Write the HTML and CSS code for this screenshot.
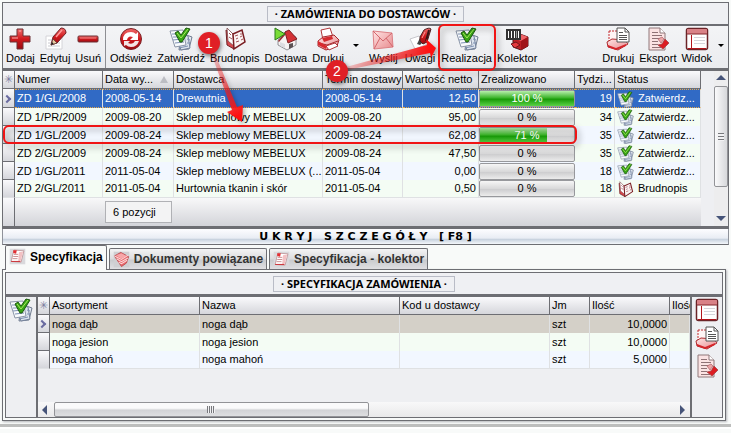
FILE: index.html
```html
<!DOCTYPE html>
<html lang="pl">
<head>
    <meta charset="UTF-8">
    <meta name="viewport" content="width=device-width, initial-scale=1.0">
    <title>Zamówienia do dostawców</title>
    <link rel="stylesheet" href="styles.css">
</head>
<body>
    <!-- Ikony -->
    <svg class="sprites" aria-hidden="true">
        <defs>
            <linearGradient id="red" x1="0" y1="0" x2="0" y2="1">
                <stop offset="0" stop-color="#f06a6a"/>
                <stop offset="0.5" stop-color="#d01a1e"/>
                <stop offset="1" stop-color="#9c0a10"/>
            </linearGradient>
            <linearGradient id="pink" x1="0" y1="0" x2="1" y2="1">
                <stop offset="0" stop-color="#ffe4e4"/>
                <stop offset="1" stop-color="#e88a8e"/>
            </linearGradient>
            <linearGradient id="arrow1" gradientUnits="userSpaceOnUse" x1="212" y1="52" x2="240" y2="116">
                <stop offset="0" stop-color="#f02020" stop-opacity="0.15"/>
                <stop offset="0.8" stop-color="#f81818" stop-opacity="0.85"/>
                <stop offset="1" stop-color="#ff1010"/>
            </linearGradient>
            <linearGradient id="arrow2" gradientUnits="userSpaceOnUse" x1="346" y1="69" x2="430" y2="49">
                <stop offset="0" stop-color="#f02020" stop-opacity="0.2"/>
                <stop offset="0.8" stop-color="#f81818" stop-opacity="0.85"/>
                <stop offset="1" stop-color="#ff1010"/>
            </linearGradient>
        </defs>
        <symbol id="i-plus" viewBox="0 0 24 24">
            <path d="M9 2h6v7h7v6h-7v7H9v-7H2V9h7z" fill="url(#red)" stroke="#6d3034"/>
            <path d="M11 4h2M4 11h6" stroke="#f9b0b0" fill="none"/>
        </symbol>
        <symbol id="i-minus" viewBox="0 0 24 24">
            <rect x="2" y="9" width="20" height="6" rx="1" fill="url(#red)" stroke="#6d3034"/>
            <path d="M4 11h16" stroke="#f08080"/>
        </symbol>
        <symbol id="i-edit" viewBox="0 0 24 24">
            <path d="M3 9h16v13H3z" fill="#fff" stroke="#d4d4d8"/>
            <path d="M5 13h6M5 16h12M5 19h12" stroke="#c9c9cf"/>
            <path d="M8 18l2-8 8-9q5 0 5 5l-9 10z" fill="url(#red)" stroke="#742025"/>
            <path d="M8 18l2-6 4 4z" fill="#e7caa0" stroke="#55383a" stroke-width=".7"/>
            <path d="M13 10l6-7" stroke="#ff9a9a" stroke-width="1.5"/>
            <path d="M8 18l1-3 1.600 1.700z" fill="#222"/>
        </symbol>
        <symbol id="i-refresh" viewBox="0 0 24 24">
            <circle cx="12" cy="12" r="10.500" fill="url(#red)" stroke="#7a2226"/>
            <path d="M4 13q0-8 8-8 3 0 5 2l2-2v8h-8l3-3q-5-2-6 3z" fill="#fff"/>
            <path d="M20 14q-2 6-8 6-3 0-5-2l-2 1v-5h6l-2 2q5 2 7-2z" fill="#f3e4e4"/>
        </symbol>
        <symbol id="i-approve" viewBox="0 0 24 24">
            <path d="M12 6l11 4-3 12-10 1z" fill="#e6ebf3" stroke="#6f7b8f"/>
            <path d="M6 6l13 3 2 12-9 2z" fill="#dde4ee" stroke="#74819a"/>
            <path d="M1 4l13-1 3 15-11 2z" fill="#f8fafc" stroke="#8b95a8"/>
            <path d="M3 7l4 0M4 10l4 0M4 13l9-1M6 16l9-1M10 21l9-2M18 12l3 1M18 16l3 0" stroke="#7f92b4"/>
            <path d="M6 6l3-2 3 4 5-7 4 1-8 13-2 0z" fill="#37a516" stroke="#1f5a10"/>
            <path d="M8 6l4 5 7-9" fill="none" stroke="#a9e85c"/>
        </symbol>
        <symbol id="i-book" viewBox="0 0 24 24">
            <path d="M3 3l7 4 1 15-7-4z" fill="#d8484d" stroke="#702226"/>
            <path d="M4 1l6 6 1 12-6-5z" fill="#fff" stroke="#7d4a4d" stroke-width=".8"/>
            <path d="M10 7l9-4 3 12-11 7z" fill="#faf4f3" stroke="#7a1e23" stroke-width="1.500"/>
            <path d="M12 9l3-1M13 12l2-1M13 15l3-1M17 7l2 0M17 10l2-1M18 13l2-1M6 6l2 2M6 10l3 2" stroke="#a5555a"/>
        </symbol>
        <symbol id="i-delivery" viewBox="0 0 24 24">
            <path d="M4 13l8-9 10 6v8l-9 5-9-5z" fill="#f5f2f2" stroke="#77777d" stroke-width=".8"/>
            <path d="M11 5l4-2 8 9-9 4z" fill="#d33236" stroke="#822125"/>
            <path d="M11 5l-7 9 1 1 7-8z" fill="#962e31"/>
            <path d="M15 22v-5l4-1v4z" fill="#5c5254"/>
            <path d="M6 15l5 2v4l-5-2z" fill="#dcdce0"/>
            <path d="M1 1l10 6-10 6z" fill="#79dc36" stroke="#2b7a1b"/>
        </symbol>
        <symbol id="i-print" viewBox="0 0 24 24">
            <path d="M5 3l9-2 3 9-10 3z" fill="#fff" stroke="#b13a3e"/>
            <path d="M2 14l5-4 11-2 5 5-2 6-11 4-8-4z" fill="url(#pink)" stroke="#a5272b"/>
            <path d="M6 11l10-2 1 3-9 3z" fill="#d32c30"/>
            <path d="M3 16l8 2 11-4" fill="none" stroke="#a5272b"/>
            <path d="M10 19l9-3 3 3-9 4z" fill="#fff" stroke="#b13a3e"/>
            <path d="M2 14l9 5-1 3-8-4z" fill="#d92a2f"/>
        </symbol>
        <symbol id="i-mail" viewBox="0 0 24 24">
            <path d="M2 4l19 2 1 14-19 2z" fill="url(#pink)" stroke="#dc8085"/>
            <path d="M2 4l10 10 9-8M3 22l6-11M22 20l-7-9" fill="none" stroke="#d3666c"/>
        </symbol>
        <symbol id="i-note" viewBox="0 0 24 24">
            <path d="M2 12l9-3 9 8-13 5z" fill="#fff" stroke="#c7c7cc"/>
            <path d="M9 17l3-6 5 2-5 5z" fill="#444"/>
            <path d="M12 10l4-7q5-3 7-1l-4 13-4 2-3-3z" fill="url(#red)" stroke="#4b2022"/>
            <path d="M17 5l-3 6" stroke="#ff9a9a"/>
            <path d="M21 3l-3 11" stroke="#3b1618" stroke-width="2"/>
        </symbol>
        <symbol id="i-collector" viewBox="0 0 24 24">
            <path d="M8 11l7-4 8 3v9l-7 4-8-3z" fill="#bd2025" stroke="#5c1418"/>
            <path d="M8 11l8 3 7-4-8-3z" fill="#ef6468"/>
            <path d="M16 14v9l7-4v-9z" fill="#a0151a"/>
            <rect x="1" y="2" width="15" height="11" fill="#333"/>
            <path d="M3.500 4v7M6.500 4v7M9.500 4v7M13.500 4v7" stroke="#fff"/>
            <path d="M11.500 4v7" stroke="#fff" stroke-width=".5"/>
            <path d="M6 17l5-2 4 3-5 3z" fill="#e63a3e" stroke="#701519"/>
        </symbol>
        <symbol id="i-printdoc" viewBox="0 0 24 24">
            <path d="M3 4h9v10H3z" fill="#fff5f5" stroke="#c22a2e" stroke-dasharray="2 1"/>
            <path d="M1 15l5-3 13 1 3 4-10 6-10-3z" fill="url(#pink)" stroke="#ae2a2e"/>
            <path d="M2 18l8 3 10-4v2l-10 4-8-3z" fill="#d5262b"/>
            <path d="M11 1h8l4 4v10H11z" fill="#fff" stroke="#555"/>
            <path d="M19 1v4h4" fill="none" stroke="#555"/>
            <path d="M13 5.500h4M13 8.500h8M13 10.500h8M13 12.500h8" stroke="#555"/>
        </symbol>
        <symbol id="i-export" viewBox="0 0 24 24">
            <path d="M3 1h11l5 5v17H3z" fill="#fbe3e3" stroke="#90787b"/>
            <path d="M14 1v5h5" fill="#fff" stroke="#90787b"/>
            <path d="M6 5.500h6M6 8.500h10M6 11.500h10M6 14.500h6M6 17.500h6M6 20.500h9" stroke="#8f7275"/>
            <path d="M12 12l4-2 2 2-3 4z" fill="#eba5a7" stroke="#ad6468" stroke-width=".7"/>
            <path d="M12 18l4-1 3-5 4 4-6 6z" fill="#dc1d22" stroke="#9c4045" stroke-width=".7"/>
        </symbol>
        <symbol id="i-view" viewBox="0 0 24 24">
            <rect x="1.500" y="1.500" width="21" height="21" rx="2" fill="#fff" stroke="#6b2428" stroke-width="1.500"/>
            <path d="M2 3q0-1 1-1h18q1 0 1 1v4H2z" fill="#d98287"/>
            <path d="M2 7h20" stroke="#84282c"/>
            <path d="M6.500 8v13M3 21.500h18" stroke="#b3151b"/>
            <path d="M9 10.500h11M9 13.500h11M9 16.500h11" stroke="#d5d5da"/>
        </symbol>
        <symbol id="i-spec" viewBox="0 0 24 24">
            <path d="M1 1h22v22H1z" fill="#d9d9dc"/>
            <path d="M7 3l14 1-4 16-14-1z" fill="#fff" stroke="#b48387"/>
            <path d="M14 6l6-1-4 15-3-1z" fill="#f3c1c3"/>
            <path d="M7 9h6M6 12h7M5 15h7" stroke="#b8676b"/>
            <path d="M6 3l5 0-1 5-4-1z" fill="#e32e33"/>
            <path d="M3 19h13" stroke="#cc3a3f" stroke-width="1.500"/>
        </symbol>
        <symbol id="i-docs" viewBox="0 0 24 24">
            <path d="M1 1h22v22H1z" fill="#cfcfd2"/>
            <path d="M2 7l9-5 11 6-3 9-7 5z" fill="#e8686c" stroke="#b23439"/>
            <path d="M2 7l10 5 9-6M5 11l7 4 9-5M8 16l4 2 8-5" fill="none" stroke="#fbd5d6" stroke-width="1.500"/>
            <path d="M4 6l8-3 7 4-7 4z" fill="#f7a6a8"/>
        </symbol>
    </svg>

    <main class="window">
        <section class="orders">
            <header class="title-bar"><h1>· ZAMÓWIENIA DO DOSTAWCÓW ·</h1></header>

            <nav class="toolbar">
                <button type="button"><svg><use href="#i-plus"/></svg>Dodaj</button>
                <button type="button"><svg><use href="#i-edit"/></svg>Edytuj</button>
                <button type="button"><svg><use href="#i-minus"/></svg>Usuń</button>
                <span class="separator"></span>
                <button type="button"><svg><use href="#i-refresh"/></svg>Odśwież</button>
                <button type="button"><svg><use href="#i-approve"/></svg>Zatwierdź</button>
                <button type="button"><svg><use href="#i-book"/></svg>Brudnopis</button>
                <button type="button"><svg><use href="#i-delivery"/></svg>Dostawa</button>
                <button type="button"><svg><use href="#i-print"/></svg>Drukuj</button>
                <button type="button" class="more" aria-label="Więcej wydruków"></button>
                <button type="button" class="roomy"><svg><use href="#i-mail"/></svg>Wyślij</button>
                <button type="button" class="roomy"><svg><use href="#i-note"/></svg>Uwagi</button>
                <button type="button"><svg><use href="#i-approve"/></svg>Realizacja</button>
                <button type="button"><svg><use href="#i-collector"/></svg>Kolektor</button>
                <span class="spacer"></span>
                <button type="button"><svg><use href="#i-printdoc"/></svg>Drukuj</button>
                <button type="button"><svg><use href="#i-export"/></svg>Eksport</button>
                <button type="button"><svg><use href="#i-view"/></svg>Widok</button>
                <button type="button" class="more narrow" aria-label="Więcej widoków"></button>
            </nav>

            <div class="orders-body">
                <table class="grid">
                    <colgroup>
                        <col class="w-mark"><col class="w-number"><col class="w-date"><col><col class="w-term">
                        <col class="w-net"><col class="w-done"><col class="w-week"><col class="w-status">
                    </colgroup>
                    <thead>
                        <tr>
                            <th class="mark">✳</th><th>Numer</th><th>Data wy... <i class="sort"></i></th><th>Dostawca</th>
                            <th>Termin dostawy</th><th>Wartość netto</th><th>Zrealizowano</th><th>Tydzi...</th><th>Status</th>
                        </tr>
                    </thead>
                    <tbody>
                        <tr class="selected">
                            <td class="mark"><i class="current"></i></td><td>ZD 1/GL/2008</td><td>2008-05-14</td><td>Drewutnia</td><td>2008-05-14</td><td class="num">12,50</td>
                            <td class="done"><div class="bar full"><span class="fill" style="width: 100%"></span><b>100 %</b></div></td>
                            <td class="num">19</td><td><svg class="small"><use href="#i-approve"/></svg>Zatwierdz...</td>
                        </tr>
                        <tr>
                            <td class="mark"></td><td>ZD 1/PR/2009</td><td>2009-08-20</td><td>Sklep meblowy MEBELUX</td><td>2009-08-20</td><td class="num">95,00</td>
                            <td class="done"><div class="bar"><b>0 %</b></div></td>
                            <td class="num">34</td><td><svg class="small"><use href="#i-approve"/></svg>Zatwierdz...</td>
                        </tr>
                        <tr>
                            <td class="mark"></td><td>ZD 1/GL/2009</td><td>2009-08-24</td><td>Sklep meblowy MEBELUX</td><td>2009-08-24</td><td class="num">62,08</td>
                            <td class="done"><div class="bar full"><span class="fill" style="width: 71%"></span><b>71 %</b></div></td>
                            <td class="num">35</td><td><svg class="small"><use href="#i-approve"/></svg>Zatwierdz...</td>
                        </tr>
                        <tr>
                            <td class="mark"></td><td>ZD 2/GL/2009</td><td>2009-08-24</td><td>Sklep meblowy MEBELUX</td><td>2009-08-24</td><td class="num">47,50</td>
                            <td class="done"><div class="bar"><b>0 %</b></div></td>
                            <td class="num">35</td><td><svg class="small"><use href="#i-approve"/></svg>Zatwierdz...</td>
                        </tr>
                        <tr>
                            <td class="mark"></td><td>ZD 1/GL/2011</td><td>2011-05-04</td><td>Sklep meblowy MEBELUX (...</td><td>2011-05-04</td><td class="num">0,00</td>
                            <td class="done"><div class="bar"><b>0 %</b></div></td>
                            <td class="num">18</td><td><svg class="small"><use href="#i-approve"/></svg>Zatwierdz...</td>
                        </tr>
                        <tr>
                            <td class="mark"></td><td>ZD 2/GL/2011</td><td>2011-05-04</td><td>Hurtownia tkanin i skór</td><td>2011-05-04</td><td class="num">0,50</td>
                            <td class="done"><div class="bar"><b>0 %</b></div></td>
                            <td class="num">18</td><td><svg class="small"><use href="#i-book"/></svg>Brudnopis</td>
                        </tr>
                    </tbody>
                    <tfoot>
                        <tr>
                            <td class="mark"></td><td></td><td class="count"><span>6 pozycji</span></td><td colspan="6"></td>
                        </tr>
                    </tfoot>
                </table>
                <div class="scroll-y">
                    <i class="up"></i>
                    <div class="thumb"></div>
                    <i class="down"></i>
                </div>
            </div>
        </section>

        <button type="button" class="toggle">U K R Y J &nbsp; S Z C Z E G Ó Ł Y &nbsp; [ F8 ]</button>

        <div class="tabs" role="tablist">
            <button type="button" role="tab" aria-selected="true" class="active"><svg class="small"><use href="#i-spec"/></svg>Specyfikacja</button>
            <button type="button" role="tab" aria-selected="false"><svg class="small"><use href="#i-docs"/></svg>Dokumenty powiązane</button>
            <button type="button" role="tab" aria-selected="false"><svg class="small"><use href="#i-spec"/></svg>Specyfikacja - kolektor</button>
        </div>

        <section class="details">
            <div class="details-inner">
                <header class="title-bar"><h2>· SPECYFIKACJA ZAMÓWIENIA ·</h2></header>
                <div class="details-body">
                    <div class="side">
                        <button type="button" aria-label="Zatwierdź"><svg><use href="#i-approve"/></svg></button>
                    </div>
                    <div class="spec">
                        <table class="grid">
                            <colgroup>
                                <col class="w-mark"><col class="w-product"><col class="w-name"><col class="w-code">
                                <col class="w-unit"><col class="w-qty"><col>
                            </colgroup>
                            <thead>
                                <tr><th class="mark">✳</th><th>Asortyment</th><th>Nazwa</th><th>Kod u dostawcy</th><th>Jm</th><th>Ilość</th><th class="cut">Ilość</th></tr>
                            </thead>
                            <tbody>
                                <tr class="current-row"><td class="mark"><i class="current"></i></td><td>noga dąb</td><td>noga dąb</td><td></td><td>szt</td><td class="num">10,0000</td><td></td></tr>
                                <tr><td class="mark"></td><td>noga jesion</td><td>noga jesion</td><td></td><td>szt</td><td class="num">10,0000</td><td></td></tr>
                                <tr><td class="mark"></td><td>noga mahoń</td><td>noga mahoń</td><td></td><td>szt</td><td class="num">5,0000</td><td></td></tr>
                            </tbody>
                        </table>
                        <div class="scroll-x">
                            <i class="left"></i>
                            <div class="thumb"></div>
                            <i class="right"></i>
                        </div>
                    </div>
                    <div class="side">
                        <button type="button" aria-label="Widok"><svg><use href="#i-view"/></svg></button>
                        <button type="button" aria-label="Drukuj"><svg><use href="#i-printdoc"/></svg></button>
                        <button type="button" aria-label="Eksport"><svg><use href="#i-export"/></svg></button>
                    </div>
                </div>
            </div>
        </section>
    </main>
    <footer class="bottom-edge"></footer>

    <!-- Oznaczenia kroków instrukcji -->
    <svg class="callouts" viewBox="0 0 731 433">
        <g class="frames">
            <rect x="439" y="25" width="56" height="45" rx="5"/>
            <rect x="4" y="126" width="572" height="17" rx="5"/>
        </g>
        <path d="M211 53L214 51L237 107L243 105L242 122L227 112L232 110Z" fill="url(#arrow1)" class="arrow"/>
        <path d="M347 70L346 67L427 45L426 39L436 48L431 58L430 53Z" fill="url(#arrow2)" class="arrow"/>
        <g class="steps">
            <circle cx="209" cy="43" r="11"/>
            <circle cx="337" cy="71" r="11"/>
            <text x="209" y="48">1</text>
            <text x="337" y="76">2</text>
        </g>
    </svg>
</body>
</html>
```
FILE: styles.css
```css
body {
    margin: 0;
    background-color: #f8faf9;
    font-family: "Liberation Sans", Arial, sans-serif;
    font-size: 11px;
    color: #000;
}

button {
    font-family: inherit;
    font-size: inherit;
    color: inherit;
    background: none;
    border: none;
    padding: 0;
    margin: 0;
}

.sprites {
    position: absolute;
    width: 0;
    height: 0;
}

.window {
    padding: 2px 2px 0 2px;
}

.orders {
    border: 1px solid #6d6e73;
    border-bottom-width: 3px;
    background-color: #eeeff2;
}

/* Tytuły */
.title-bar {
    height: 21px;
    display: flex;
    justify-content: center;
    align-items: center;
    background-color: #eff0f3;
    border-bottom: 2px solid #6d6e73;
}

.title-bar h1,
.title-bar h2 {
    margin: 0;
    padding: 0 7px;
    border: 1px solid #b9bcc6;
    font-family: "Noto Sans", sans-serif;
    font-size: 11px;
    line-height: 14px;
    font-weight: bold;
    white-space: pre;
}

/* Pasek narzędzi */
.toolbar {
    height: 42px;
    display: flex;
    gap: 5px;
    padding: 0 3px;
    background: linear-gradient(#f3f4f6, #ebecef);
    border-bottom: 3px solid #6d6e73;
}

.toolbar button {
    display: flex;
    flex-direction: column;
    align-items: center;
    padding-top: 1px;
    line-height: 14px;
    white-space: nowrap;
}

.toolbar svg {
    width: 24px;
    height: 24px;
}

.toolbar .roomy {
    padding-left: 1px;
    padding-right: 1px;
}

.toolbar .separator {
    width: 1px;
    margin: 0 -1px;
    background-color: #8d8e93;
}

.toolbar .spacer {
    flex: 1;
}

.toolbar .more {
    width: 14px;
    padding-top: 18px;
}

.toolbar .narrow {
    width: 8px;
}

.more::before {
    content: "";
    border: 3px solid transparent;
    border-top-color: #000;
    border-bottom: none;
}

/* Tabele */
.orders-body {
    display: flex;
}

.grid {
    width: 100%;
    table-layout: fixed;
    border-collapse: separate;
    border-spacing: 0;
    flex: 1;
}

.grid th,
.grid td {
    box-sizing: border-box;
    height: 18px;
    padding: 0 2px;
    line-height: 15px;
    text-align: left;
    font-weight: normal;
    white-space: nowrap;
    overflow: hidden;
    border-right: 1px solid #dfe1e3;
}

.grid th {
    background: linear-gradient(#fafafc, #d5d6db);
    border-right-color: #6d6e73;
    border-bottom: 1px solid #6d6e73;
}

.grid tbody tr {
    background-color: #f2f7ff;
}

.grid tbody tr:nth-child(even) {
    background-color: #f4fcf4;
}

.grid tbody tr:last-child td {
    border-bottom: 1px solid #dfe1e3;
}

.grid .mark {
    padding: 0;
    text-align: center;
    color: #7b7fa0;
    background: linear-gradient(#fafafc, #d5d6db);
    border-right: 1px solid #6d6e73;
    border-bottom: 1px solid #6d6e73;
}

.grid td.num {
    text-align: right;
}

.grid .selected {
    color: #fff;
    background-color: #316ac5;
}

.selected td:not(.mark) {
    border-top: 1px dotted #e8a848;
    border-bottom: 1px dotted #e8a848;
}

.grid .current-row {
    background-color: #d4d0c8;
}

.w-mark { width: 12px; }
.w-number { width: 88px; }
.w-date { width: 71px; }
.w-term { width: 80px; }
.w-net { width: 76px; }
.w-done { width: 96px; }
.w-week { width: 40px; }
.w-status { width: 86px; }
.w-product { width: 150px; }
.w-name { width: 200px; }
.w-code { width: 150px; }
.w-unit { width: 40px; }
.w-qty { width: 80px; }

.sort {
    display: inline-block;
    margin-left: 4px;
    border: 4px solid transparent;
    border-top: none;
    border-bottom: 7px solid #bcbdc3;
}

.current {
    display: inline-block;
    width: 4px;
    height: 4px;
    border-top: 2px solid #6a6ca0;
    border-right: 2px solid #6a6ca0;
    transform: rotate(45deg);
    margin-left: -4px;
}

svg.small {
    width: 17px;
    height: 17px;
    margin: -2px 4px -2px 0;
    vertical-align: middle;
}

.grid .done {
    padding: 0;
    border: none;
}

.bar {
    position: relative;
    height: 15px;
    border: 1px solid #97989c;
    border-radius: 2px;
    background: linear-gradient(#f6f6f6, #d9d9da 50%, #cdcdcf 55%, #ececec);
    text-align: center;
    line-height: 15px;
}

.bar .fill {
    position: absolute;
    left: 0;
    top: 0;
    height: 100%;
    background: linear-gradient(#b7eeab, #3eb52c 45%, #189a08 55%, #5bd247);
}

.bar b {
    position: relative;
    font-weight: normal;
}

.bar.full b {
    color: #fff;
}

.grid tfoot td {
    height: 28px;
    border-right: none;
    background: linear-gradient(#f8f8f9, #d3d4d9);
}

.grid tfoot .mark {
    border-right: 1px solid #6d6e73;
    border-bottom: none;
}

.count span {
    display: block;
    padding: 0 7px;
    line-height: 20px;
    border: 1px solid #b0b1b5;
    background-color: #f3f3f4;
}

/* Paski przewijania */
.scroll-y {
    width: 14px;
    margin-left: 13px;
    display: flex;
    flex-direction: column;
    align-items: center;
    background-color: #ededee;
}

.scroll-y .thumb {
    flex: 1;
    width: 12px;
    margin: 6px 0 29px;
    border: 1px solid #929397;
    border-radius: 2px;
    background: repeating-linear-gradient(#77787c 0 1px, #f2f2f4 1px 3px) center / 6px 8px no-repeat, linear-gradient(90deg, #fafafb, #d7d8db);
}

.scroll-y i,
.scroll-x i {
    border: 5px solid transparent;
}

.scroll-y .up {
    margin-top: 4px;
    border-top: none;
    border-bottom-color: #465479;
}

.scroll-y .down {
    margin-bottom: 5px;
    border-bottom: none;
    border-top-color: #465479;
}

.scroll-x {
    height: 15px;
    margin-top: auto;
    display: flex;
    align-items: center;
    background: linear-gradient(#f8f8f9, #e9e9ea);
}

.scroll-x .thumb {
    width: 48%;
    height: 13px;
    margin: 0 auto 0 7px;
    border: 1px solid #929397;
    border-radius: 2px;
    background: repeating-linear-gradient(90deg, #77787c 0 1px, #f2f2f4 1px 2px) center / 8px 7px no-repeat, linear-gradient(#fafafb 40%, #d2d3d6 55%, #dedfe1);
}

.scroll-x .left {
    margin-left: 4px;
    border-left: none;
    border-right-color: #465479;
}

.scroll-x .right {
    margin-right: 5px;
    border-right: none;
    border-left-color: #465479;
}

/* Przycisk zwijania */
.toggle {
    display: block;
    width: 100%;
    height: 16px;
    border: 1px solid #8f929a;
    border-top: none;
    border-bottom-color: #6d6e73;
    background: linear-gradient(#fdfdff, #e9edf4 60%, #c9d3df 70%, #f4f7fb);
    font-family: "DejaVu Sans", Verdana, sans-serif;
    font-size: 11px;
    font-weight: bold;
    line-height: 14px;
}

/* Zakładki */
.tabs {
    display: flex;
    align-items: flex-end;
    gap: 2px;
    height: 24px;
    padding-left: 3px;
}

.tabs button {
    box-sizing: border-box;
    height: 21px;
    padding: 0 3px;
    display: flex;
    align-items: center;
    font-size: 12px;
    font-weight: bold;
    white-space: nowrap;
    color: #333;
    border: 1px solid #6d6e73;
    border-bottom: none;
    border-radius: 2px 2px 0 0;
    background: linear-gradient(#f3f3f4, #dcdcde 50%, #c9cacd 55%, #dfdfe2);
}

.tabs .active {
    position: relative;
    height: 25px;
    margin-bottom: -1px;
    padding-bottom: 3px;
    color: #000;
    background: #f8faf9;
}

/* Szczegóły */
.details {
    margin-right: 3px;
    padding: 2px;
    border: 1px solid #6d6e73;
    box-shadow: 1px 1px 2px #b5b6ba;
}

.details-inner {
    border: 1px solid #6d6e73;
}

.details .title-bar {
    border-bottom-width: 3px;
}

.details-body {
    display: flex;
    min-height: 120px;
    background-color: #eeeff2;
}

.side {
    width: 30px;
    display: flex;
    flex-direction: column;
    align-items: center;
    gap: 4px;
    padding-top: 1px;
}

.side button,
.side svg {
    display: block;
    width: 24px;
    height: 24px;
}

.spec {
    flex: 1;
    min-width: 0;
    display: flex;
    flex-direction: column;
    border-left: 2px solid #6d6e73;
    border-right: 2px solid #6d6e73;
}

.spec .grid {
    flex: none;
}

.spec .cut {
    border-right: none;
}

.bottom-edge {
    margin-top: 3px;
    height: 3px;
    background-color: #bdbebd;
    border-bottom: 2px solid #fff;
    box-shadow: 0 1px 0 #6d6e73, 0 6px 0 #eeeff0;
}

/* Oznaczenia */
.callouts {
    position: absolute;
    left: 0;
    top: 0;
    width: 731px;
    height: 433px;
    pointer-events: none;
}

.frames rect {
    fill: none;
    stroke: #f01414;
    stroke-width: 2;
    filter: drop-shadow(2px 3px 3px rgba(0, 0, 0, 0.4));
}

.arrow {
    filter: drop-shadow(2px 2px 2px rgba(0, 0, 0, 0.3));
}

.steps circle {
    fill: #e01f26;
    filter: drop-shadow(1px 2px 2px rgba(0, 0, 0, 0.5));
}

.steps text {
    fill: #fff;
    font-size: 14px;
    text-anchor: middle;
}
```
